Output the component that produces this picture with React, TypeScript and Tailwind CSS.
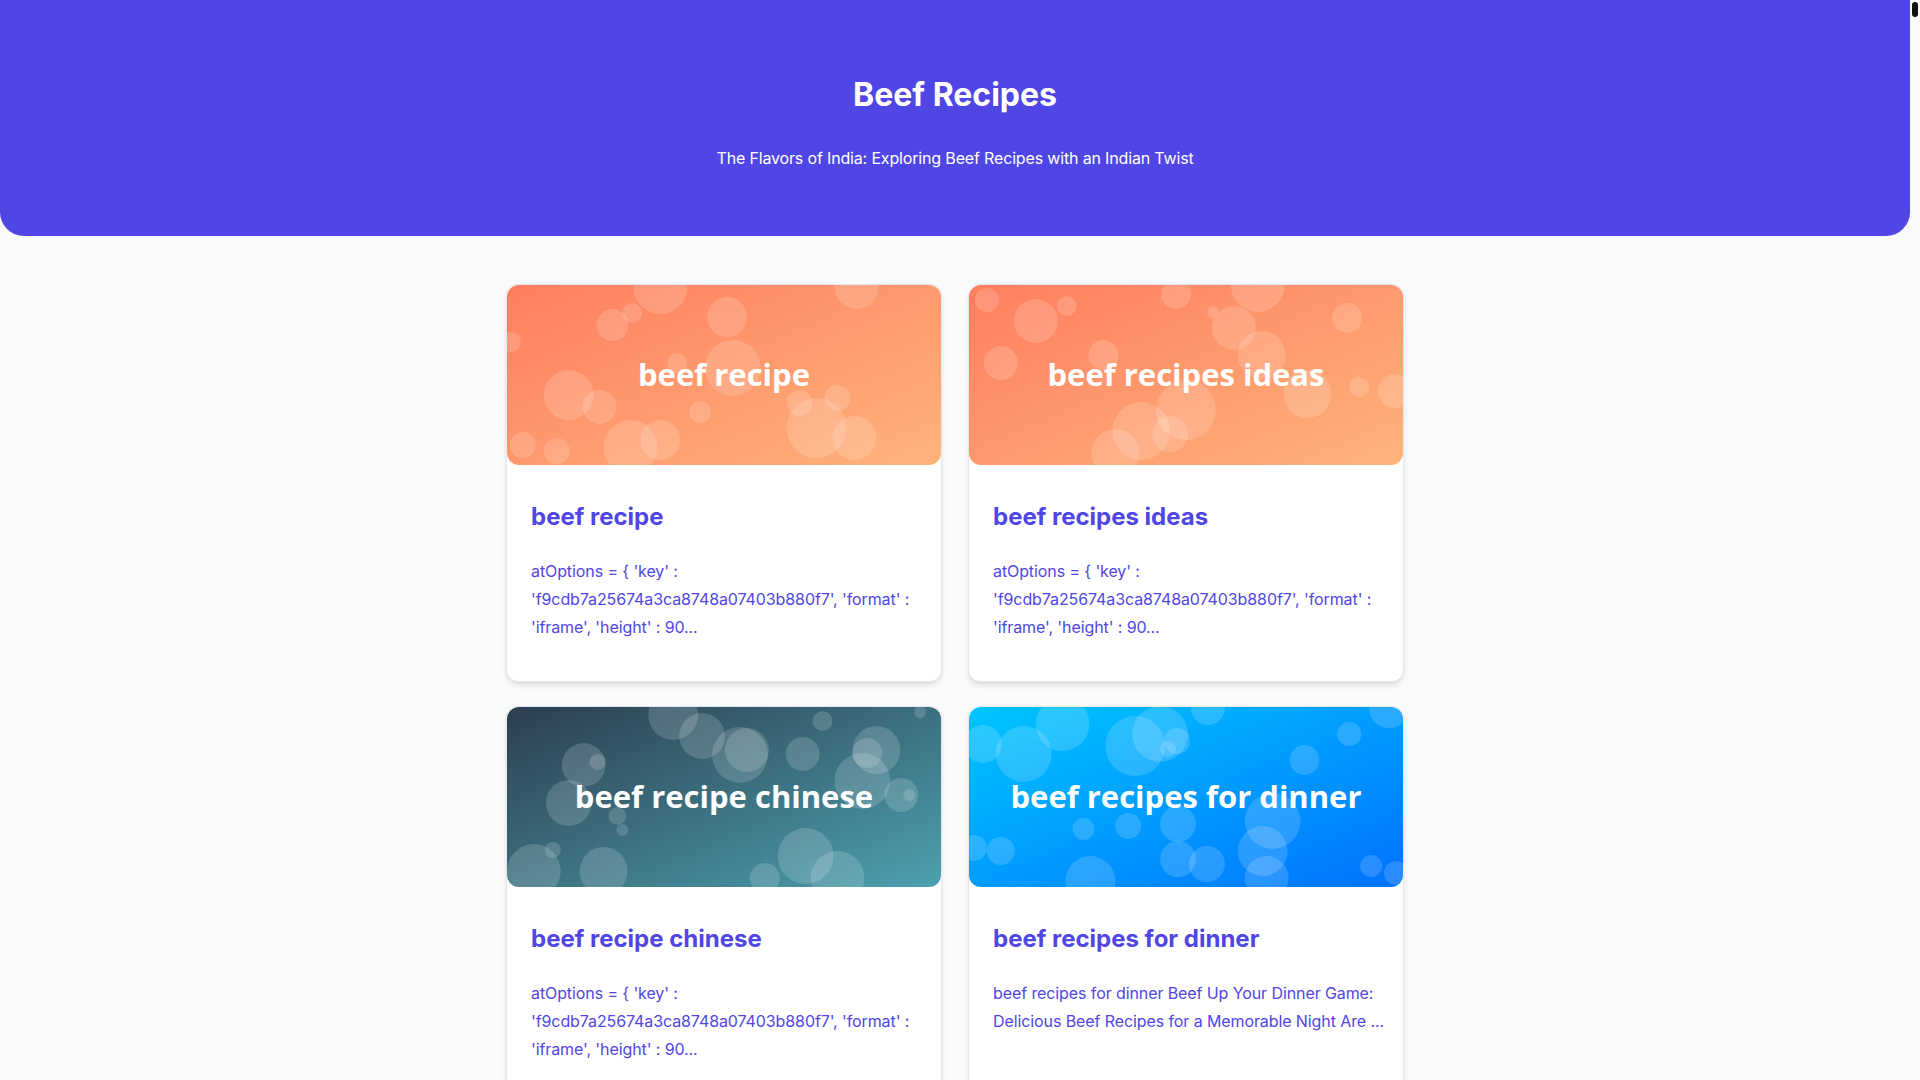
import React from 'react';

type Bubble = [number, number, number];

interface Recipe {
  title: string;
  excerpt: string;
  from: string;
  to: string;
  bubbles: Bubble[];
}

const AD_EXCERPT = "atOptions = { 'key' : 'f9cdb7a25674a3ca8748a07403b880f7', 'format' : 'iframe', 'height' : 90...";

// bokeh circles are in image coordinates (436 x 180)
const RECIPES: Recipe[] = [
  {
    title: 'beef recipe',
    excerpt: AD_EXCERPT,
    from: '#ff7e5f',
    to: '#feb47b',
    bubbles: [
      [221, 32, 20], [106, 40, 16], [126, 28, 10], [154, 2, 27], [227, 83, 28],
      [62, 110, 25], [93, 122, 17], [194, 127, 11], [311, 143, 30], [349, 153, 22],
      [332, 113, 13], [16, 160, 13], [50, 166, 13], [124, 162, 27], [154, 155, 20],
      [4, 57, 10], [351, 2, 22], [171, 78, 10], [294, 118, 13],
    ],
  },
  {
    title: 'beef recipes ideas',
    excerpt: AD_EXCERPT,
    from: '#ff7e5f',
    to: '#feb47b',
    bubbles: [
      [67, 36, 22], [32, 78, 17], [18, 15, 12], [266, 43, 22], [290, 0, 27],
      [208, 9, 15], [245, 27, 6], [173, 146, 29], [218, 125, 30], [340, 109, 24],
      [294, 70, 24], [428, 106, 17], [392, 102, 10], [147, 168, 24], [202, 149, 18],
      [98, 21, 10], [135, 70, 15], [380, 33, 15],
    ],
  },
  {
    title: 'beef recipe chinese',
    excerpt: AD_EXCERPT,
    from: '#2c3e50',
    to: '#4ca1af',
    bubbles: [
      [167, 8, 25], [196, 29, 23], [234, 48, 28], [241, 43, 22], [77, 58, 22],
      [91, 55, 8], [62, 96, 23], [111, 109, 9], [116, 123, 6], [297, 47, 17],
      [371, 43, 24], [362, 46, 15], [357, 74, 28], [396, 88, 17], [404, 88, 6],
      [300, 149, 28], [97, 164, 24], [27, 164, 27], [46, 143, 8], [259, 171, 15],
      [332, 171, 27], [317, 14, 10], [415, 5, 6],
    ],
  },
  {
    title: 'beef recipes for dinner',
    excerpt:
      'beef recipes for dinner Beef Up Your Dinner Game: Delicious Beef Recipes for a Memorable Night Are ...',
    from: '#00c6ff',
    to: '#0072ff',
    bubbles: [
      [94, 17, 27], [55, 47, 28], [14, 37, 19], [167, 39, 30], [192, 27, 28],
      [209, 34, 13], [200, 42, 8], [382, 27, 12], [337, 53, 15], [305, 114, 28],
      [295, 144, 25], [210, 117, 18], [160, 119, 13], [115, 122, 11], [32, 144, 14],
      [5, 141, 13], [210, 152, 18], [239, 157, 18], [122, 174, 25], [299, 171, 22],
      [404, 159, 11], [429, 166, 12], [240, 1, 17], [422, 1, 20],
    ],
  },
];

function Cover({ recipe, id }: { recipe: Recipe; id: string }) {
  return (
    <div className="relative h-[180px] w-full overflow-hidden rounded-xl">
      <svg
        className="absolute inset-0 h-full w-full"
        viewBox="0 0 436 180"
        preserveAspectRatio="none"
      >
        <defs>
          <linearGradient id={id} x1="0" y1="0" x2="1" y2="1">
            <stop offset="0" stopColor={recipe.from} />
            <stop offset="1" stopColor={recipe.to} />
          </linearGradient>
        </defs>
        <rect width="436" height="180" fill={`url(#${id})`} />
        {recipe.bubbles.map(([cx, cy, r], i) => (
          <circle key={i} cx={cx} cy={cy} r={r} fill="#ffffff" fillOpacity={0.16} />
        ))}
      </svg>
      <div className="relative flex h-full items-center justify-center pb-[2px]">
        <span className="font-['Open_Sans',sans-serif] text-[31px] font-bold leading-none text-white">
          {recipe.title}
        </span>
      </div>
    </div>
  );
}

function RecipeCard({ recipe, index }: { recipe: Recipe; index: number }) {
  return (
    <div className="flex flex-col rounded-xl border border-gray-200 bg-white shadow-md">
      <Cover recipe={recipe} id={`cover-${index}`} />
      <div className="pb-10 pl-6 pr-3 pt-9">
        <h2 className="text-2xl font-bold leading-8 text-[#4f46e5]">{recipe.title}</h2>
        <p className="mt-6 text-base leading-7 tracking-[-0.006em] text-[#4f46e5]">
          {recipe.excerpt}
        </p>
      </div>
    </div>
  );
}

export default function App() {
  return (
    <div className="flex h-screen w-full overflow-hidden bg-gray-50 font-['Inter',sans-serif]">
      <div className="min-w-0 flex-1 overflow-hidden">
        <header className="rounded-b-3xl bg-[#4f46e5] pb-[66px] pt-[75px] text-center text-white">
          <h1 className="text-[32px] font-bold leading-10">Beef Recipes</h1>
          <p className="mt-[31px] text-base leading-6 tracking-[-0.01em]">
            The Flavors of India: Exploring Beef Recipes with an Indian Twist
          </p>
        </header>

        <main className="mx-auto max-w-[898px] pt-12">
          <div className="grid grid-cols-2 gap-x-[26px] gap-y-6">
            {RECIPES.map((r, i) => (
              <RecipeCard key={r.title} recipe={r} index={i} />
            ))}
          </div>
        </main>
      </div>

      {/* scrollbar strip */}
      <div className="w-[10px] shrink-0 bg-gray-50">
        <div className="ml-[2px] mt-[2px] h-[15px] w-[6px] rounded-full bg-[#111111]" />
      </div>
    </div>
  );
}
